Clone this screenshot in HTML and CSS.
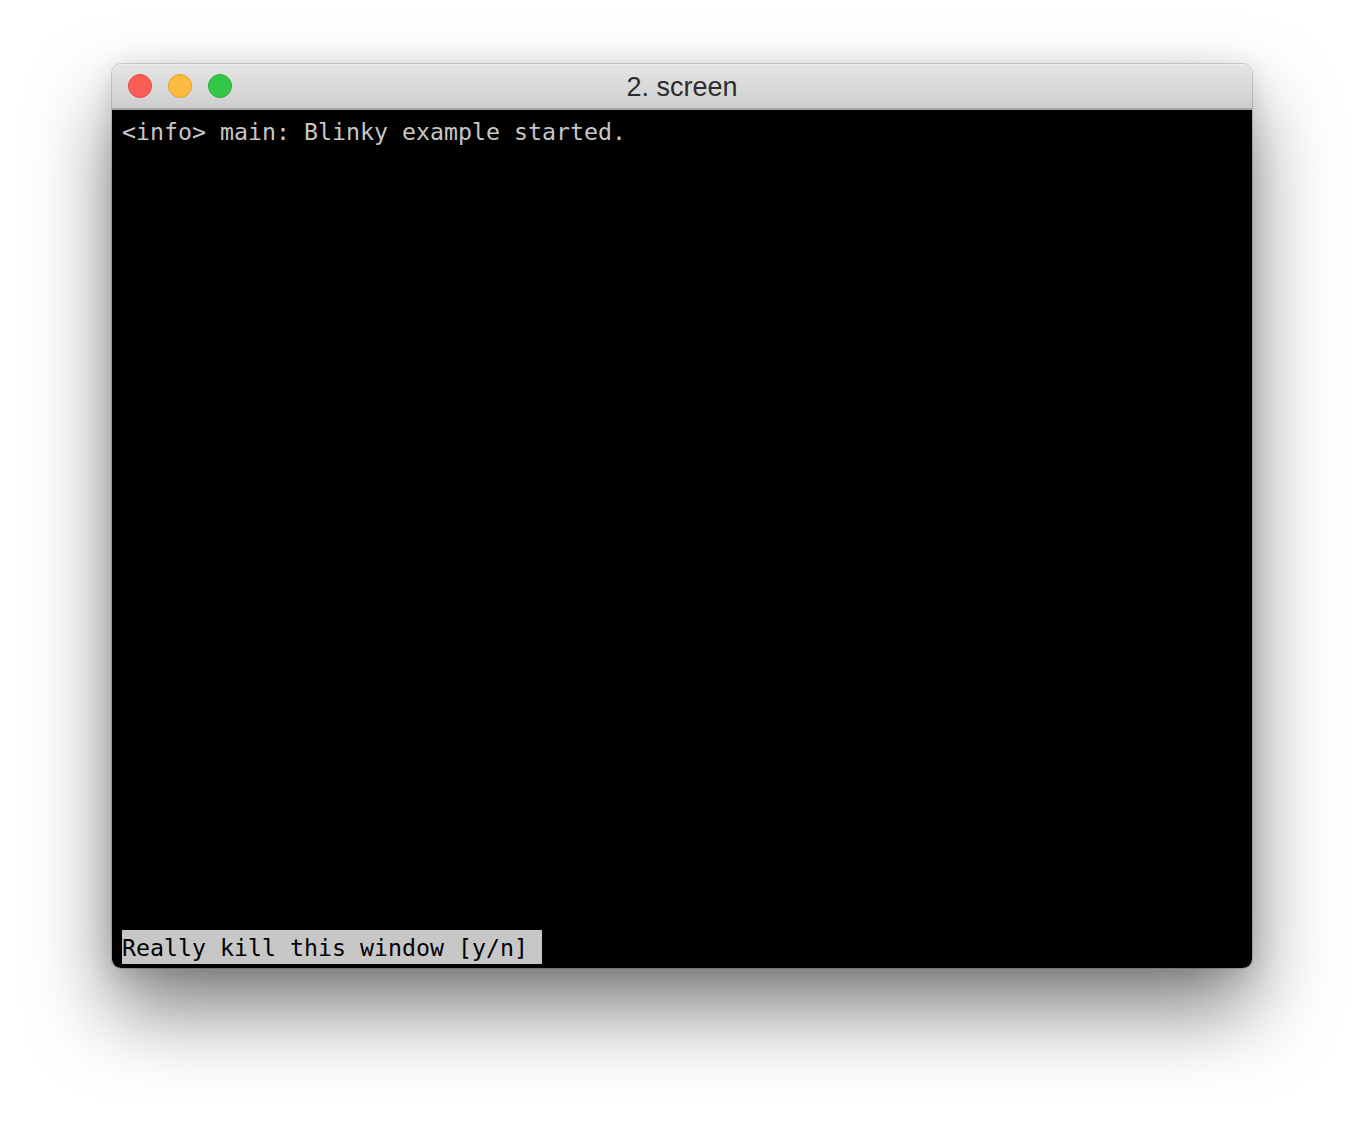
FILE: index.html
```html
<!DOCTYPE html>
<html lang="en">
<head>
<meta charset="utf-8">
<title>2. screen</title>
<link rel="stylesheet" href="styles.css">
</head>
<body>
<div class="window">
  <header class="titlebar">
    <div class="lights">
      <span class="light red"></span>
      <span class="light yellow"></span>
      <span class="light green"></span>
    </div>
    <div class="title">2. screen</div>
  </header>
  <main class="terminal">
    <div class="line">&lt;info&gt; main: Blinky example started.</div>
    <div class="status"><span class="status-text">Really kill this window [y/n]</span></div>
  </main>
</div>
</body>
</html>
```
FILE: styles.css
```css
* { box-sizing: border-box; }
html, body { margin: 0; height: 100%; background: #fff; overflow: hidden; }
body { padding: 64px 112px 160px; }
.window {
  height: 904px;
  display: flex;
  flex-direction: column;
  border-radius: 9px;
  overflow: hidden;
  box-shadow: 0 0 0 1px rgba(0,0,0,.14), 0 42px 80px rgba(0,0,0,.5), 0 4px 26px rgba(0,0,0,.13);
}
.titlebar {
  position: relative;
  height: 46px;
  flex: none;
  display: flex;
  align-items: center;
  justify-content: center;
  background: linear-gradient(#e6e5e6, #cfcecf);
  border-top: 1px solid #eeedee;
  border-bottom: 2px solid #a9a8a9;
}
.lights {
  position: absolute;
  left: 16px;
  top: 9px;
  display: flex;
  gap: 16px;
}
.light { width: 24px; height: 24px; border-radius: 50%; border: 1px solid; }
.red { background: #fc5d57; border-color: #e2463f; }
.yellow { background: #fdbc40; border-color: #e0a028; }
.green { background: #33c848; border-color: #27aa35; }
.title {
  font: 27px/44px "Liberation Sans", Arial, sans-serif;
  color: #2e2c2e;
}
.terminal {
  flex: 1;
  background: #000;
  padding: 6px 0 4px 10px;
  display: flex;
  flex-direction: column;
  justify-content: space-between;
  align-items: flex-start;
  font-family: "DejaVu Sans Mono", monospace;
  font-size: 23.26px;
  line-height: 32px;
  white-space: pre;
}
.line { color: #c7c7c7; }
.status {
  width: 420px;
  height: 34px;
  padding-top: 1px;
  line-height: 34px;
  background: #c7c7c7;
  color: #000;
}
```
